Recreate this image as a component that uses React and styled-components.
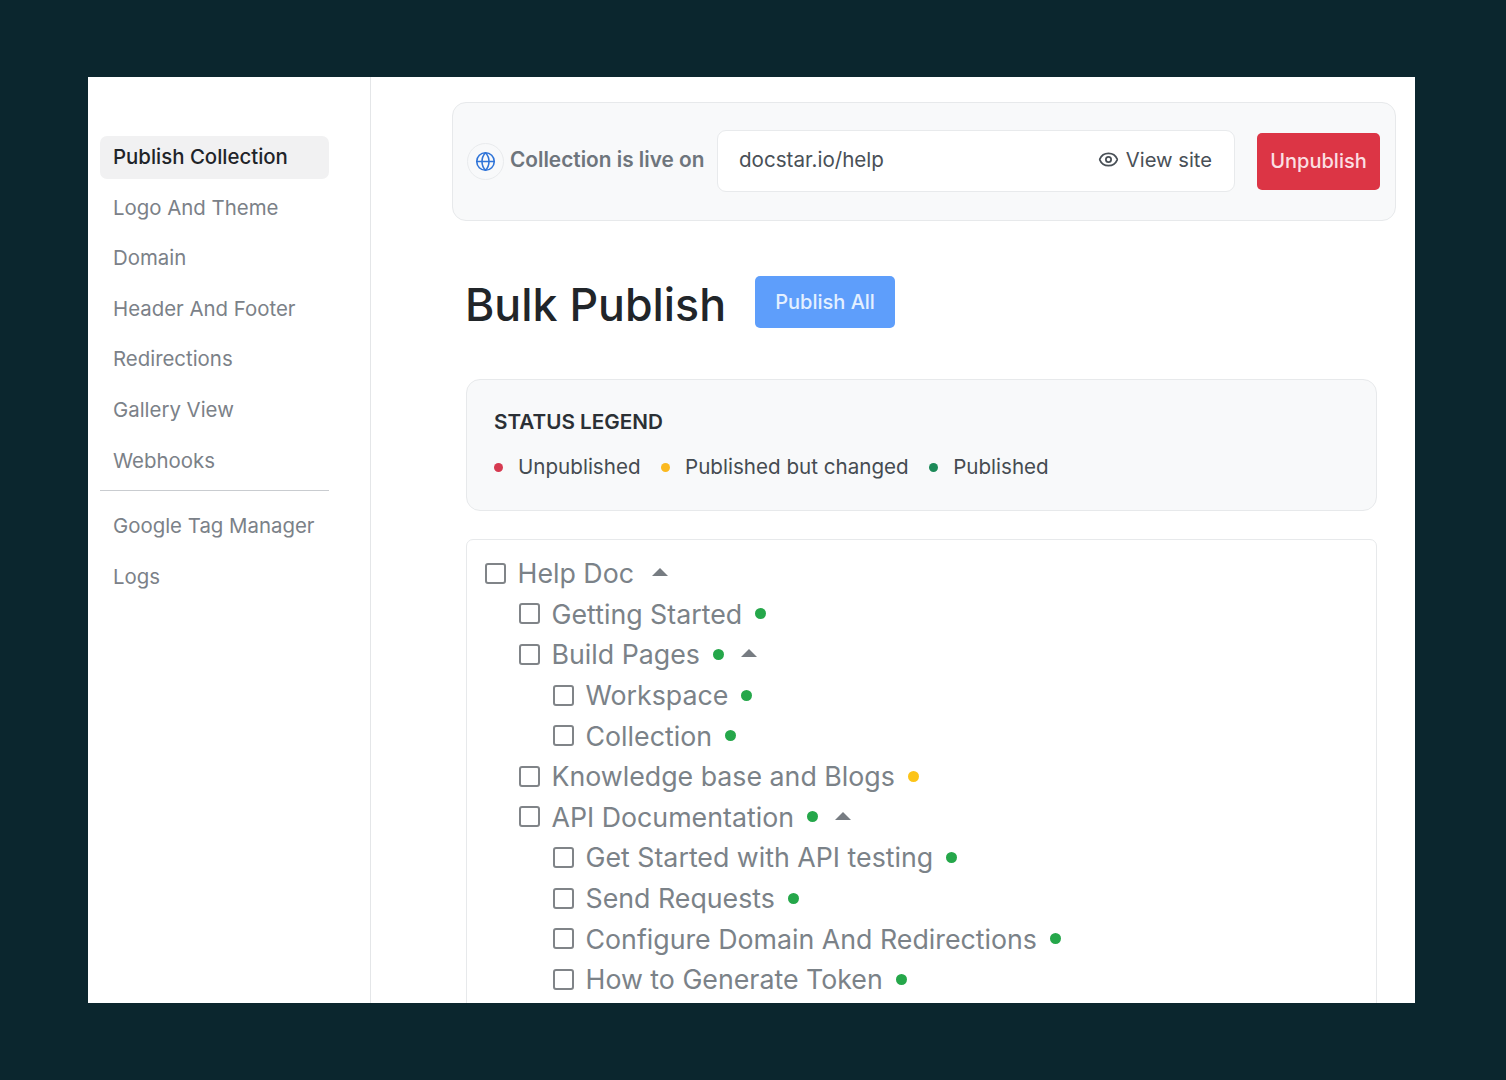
import { Fragment } from "react";
import styled, { createGlobalStyle } from "styled-components";
import { Globe, Eye } from "lucide-react";

const GlobalStyle = createGlobalStyle`
  html, body {
    margin: 0;
    padding: 0;
    background-color: #0b262e;
  }
  * {
    box-sizing: border-box;
  }
`;

const Backdrop = styled.div`
  width: 1506px;
  height: 1080px;
  padding: 77px 91px 77px 88px;
  background-color: #0b262e;
  font-family: Inter, "Liberation Sans", sans-serif;
`;

const Window = styled.div`
  display: flex;
  height: 926px;
  background-color: #fff;
  overflow: hidden;
`;

const Sidebar = styled.nav`
  display: flex;
  flex-direction: column;
  flex: 0 0 283px;
  padding: 59px 41px 0 12px;
  border-right: 1px solid #e4e6e8;
`;

const NavItem = styled.div`
  display: flex;
  align-items: center;
  height: 43px;
  margin-bottom: 7.6px;
  padding: 0 0 2px 13px;
  border-radius: 7px;
  font-size: 20.4px;
  font-weight: ${(p) => (p.$active ? 500 : 400)};
  color: ${(p) => (p.$active ? "#1f2429" : "#7b8188")};
  background-color: ${(p) => (p.$active ? "#f1f1f2" : "transparent")};
  white-space: nowrap;
`;

const NavDivider = styled.div`
  height: 1px;
  margin: 0 0 14px;
  background-color: #c9ccd0;
`;

const Main = styled.main`
  flex: 1;
  min-width: 0;
  padding: 25px 19px 0 81px;
`;

const LiveCard = styled.section`
  display: flex;
  align-items: center;
  height: 119px;
  padding: 0 15px 0 14px;
  background-color: #f8f9fa;
  border: 1px solid #e7e9eb;
  border-radius: 14px;
`;

const GlobeBadge = styled.div`
  display: flex;
  align-items: center;
  justify-content: center;
  flex: none;
  width: 37px;
  height: 37px;
  margin-bottom: 1px;
  border: 1px solid #e9ebed;
  border-radius: 50%;
  color: #2f74d8;
`;

const LiveLabel = styled.span`
  flex: none;
  width: 207px;
  margin: 0 0 4px 6px;
  font-size: 20.8px;
  font-weight: 600;
  color: #6e757c;
  white-space: nowrap;
`;

const UrlBox = styled.div`
  display: flex;
  align-items: center;
  justify-content: space-between;
  flex: none;
  width: 518px;
  height: 62px;
  margin-bottom: 1px;
  padding: 0 22px 4px 21px;
  background-color: #fff;
  border: 1px solid #e8eaec;
  border-radius: 9px;
  font-size: 20.6px;
  color: #495057;
`;

const ViewSite = styled.span`
  display: flex;
  align-items: center;
  gap: 7px;
  font-size: 20.2px;
`;

const UnpublishButton = styled.button`
  flex: none;
  width: 123px;
  height: 57px;
  margin-left: 22px;
  padding: 0 0 2px;
  background-color: #dc3545;
  border: 0;
  border-radius: 5px;
  font: 500 20px Inter, "Liberation Sans", sans-serif;
  color: #fbdfe2;
`;

const Content = styled.div`
  margin: 0 0 0 14px;
  width: 911px;
`;

const TitleRow = styled.div`
  display: flex;
  align-items: flex-start;
  gap: 29px;
  margin-top: 55px;
`;

const Title = styled.h1`
  margin: 3px 0 0 -1px;
  font-size: 44.7px;
  font-weight: 500;
  line-height: 52px;
  color: #212529;
`;

const PublishAllButton = styled.button`
  width: 140px;
  height: 52px;
  background-color: #5e9efb;
  border: 0;
  border-radius: 5px;
  font: 500 20px Inter, "Liberation Sans", sans-serif;
  color: #e4f0ff;
`;

const LegendCard = styled.section`
  height: 132px;
  margin-top: 48px;
  padding: 28px 27px 0;
  background-color: #f8f9fa;
  border: 1px solid #e7e9eb;
  border-radius: 14px;
`;

const LegendTitle = styled.div`
  font-size: 20.7px;
  font-weight: 600;
  line-height: 28px;
  color: #2b3035;
`;

const LegendRow = styled.div`
  display: flex;
  align-items: center;
  margin-top: 17px;
  font-size: 20.6px;
  line-height: 28px;
  color: #454b51;
`;

const LegendDot = styled.span`
  flex: none;
  width: 9px;
  height: 9px;
  margin: 1px 15px 0 ${(p) => (p.$first ? 0 : 20.5)}px;
  border-radius: 50%;
  background-color: ${(p) => p.$color};
`;

const TreeCard = styled.section`
  height: 600px;
  margin-top: 28px;
  padding: 13px 18px 0;
  border: 1px solid #e7e9eb;
  border-radius: 7px 7px 0 0;
`;

const TreeRow = styled.div`
  display: flex;
  align-items: center;
  height: 40.6px;
  padding-left: ${(p) => p.$level * 34}px;
  font-size: 26.75px;
  color: #7b8288;
  white-space: nowrap;
`;

const Checkbox = styled.span`
  flex: none;
  width: 21px;
  height: 21px;
  margin-right: 11.5px;
  border: 2px solid #808488;
  border-radius: 3px;
`;

const StatusDot = styled.span`
  flex: none;
  width: 11px;
  height: 11px;
  margin-left: 13px;
  border-radius: 50%;
  background-color: ${(p) => p.$color};
`;

const Caret = styled.svg`
  flex: none;
  width: 16px;
  height: 8px;
  margin-left: ${(p) => p.$gap}px;
  margin-bottom: 2px;
  fill: #777c82;
`;

const navTop = [
  "Logo And Theme",
  "Domain",
  "Header And Footer",
  "Redirections",
  "Gallery View",
  "Webhooks",
];

const legend = [
  { label: "Unpublished", color: "#d63a50" },
  { label: "Published but changed", color: "#fbb91f" },
  { label: "Published", color: "#1c8a58" },
];

const GREEN = "#25a74a";
const YELLOW = "#fcc419";

const tree = [
  { label: "Help Doc", level: 0, caretGap: 18 },
  { label: "Getting Started", level: 1, dot: GREEN },
  { label: "Build Pages", level: 1, dot: GREEN, caretGap: 17 },
  { label: "Workspace", level: 2, dot: GREEN },
  { label: "Collection", level: 2, dot: GREEN },
  { label: "Knowledge base and Blogs", level: 1, dot: YELLOW },
  { label: "API Documentation", level: 1, dot: GREEN, caretGap: 17 },
  { label: "Get Started with API testing", level: 2, dot: GREEN },
  { label: "Send Requests", level: 2, dot: GREEN },
  { label: "Configure Domain And Redirections", level: 2, dot: GREEN },
  { label: "How to Generate Token", level: 2, dot: GREEN },
];

const App = () => {
  return (
    <Backdrop>
      <GlobalStyle />
      <Window>
        <Sidebar>
          <NavItem $active>Publish Collection</NavItem>
          {navTop.map((item) => (
            <NavItem key={item}>{item}</NavItem>
          ))}
          <NavDivider />
          <NavItem>Google Tag Manager</NavItem>
          <NavItem>Logs</NavItem>
        </Sidebar>
        <Main>
          <LiveCard>
            <GlobeBadge>
              <Globe size={21} strokeWidth={1.8} />
            </GlobeBadge>
            <LiveLabel>Collection is live on</LiveLabel>
            <UrlBox>
              <span>docstar.io/help</span>
              <ViewSite>
                <Eye size={21} strokeWidth={2} />
                View site
              </ViewSite>
            </UrlBox>
            <UnpublishButton>Unpublish</UnpublishButton>
          </LiveCard>
          <Content>
            <TitleRow>
              <Title>Bulk Publish</Title>
              <PublishAllButton>Publish All</PublishAllButton>
            </TitleRow>
            <LegendCard>
              <LegendTitle>STATUS LEGEND</LegendTitle>
              <LegendRow>
                {legend.map((item, index) => (
                  <Fragment key={item.label}>
                    <LegendDot $color={item.color} $first={index === 0} />
                    {item.label}
                  </Fragment>
                ))}
              </LegendRow>
            </LegendCard>
            <TreeCard>
              {tree.map((row) => (
                <TreeRow key={row.label} $level={row.level}>
                  <Checkbox />
                  {row.label}
                  {row.dot && <StatusDot $color={row.dot} />}
                  {row.caretGap && (
                    <Caret $gap={row.caretGap} viewBox="0 0 16 8">
                      <path d="M8 0 L16 8 L0 8 Z" />
                    </Caret>
                  )}
                </TreeRow>
              ))}
            </TreeCard>
          </Content>
        </Main>
      </Window>
    </Backdrop>
  );
};

export default App;
